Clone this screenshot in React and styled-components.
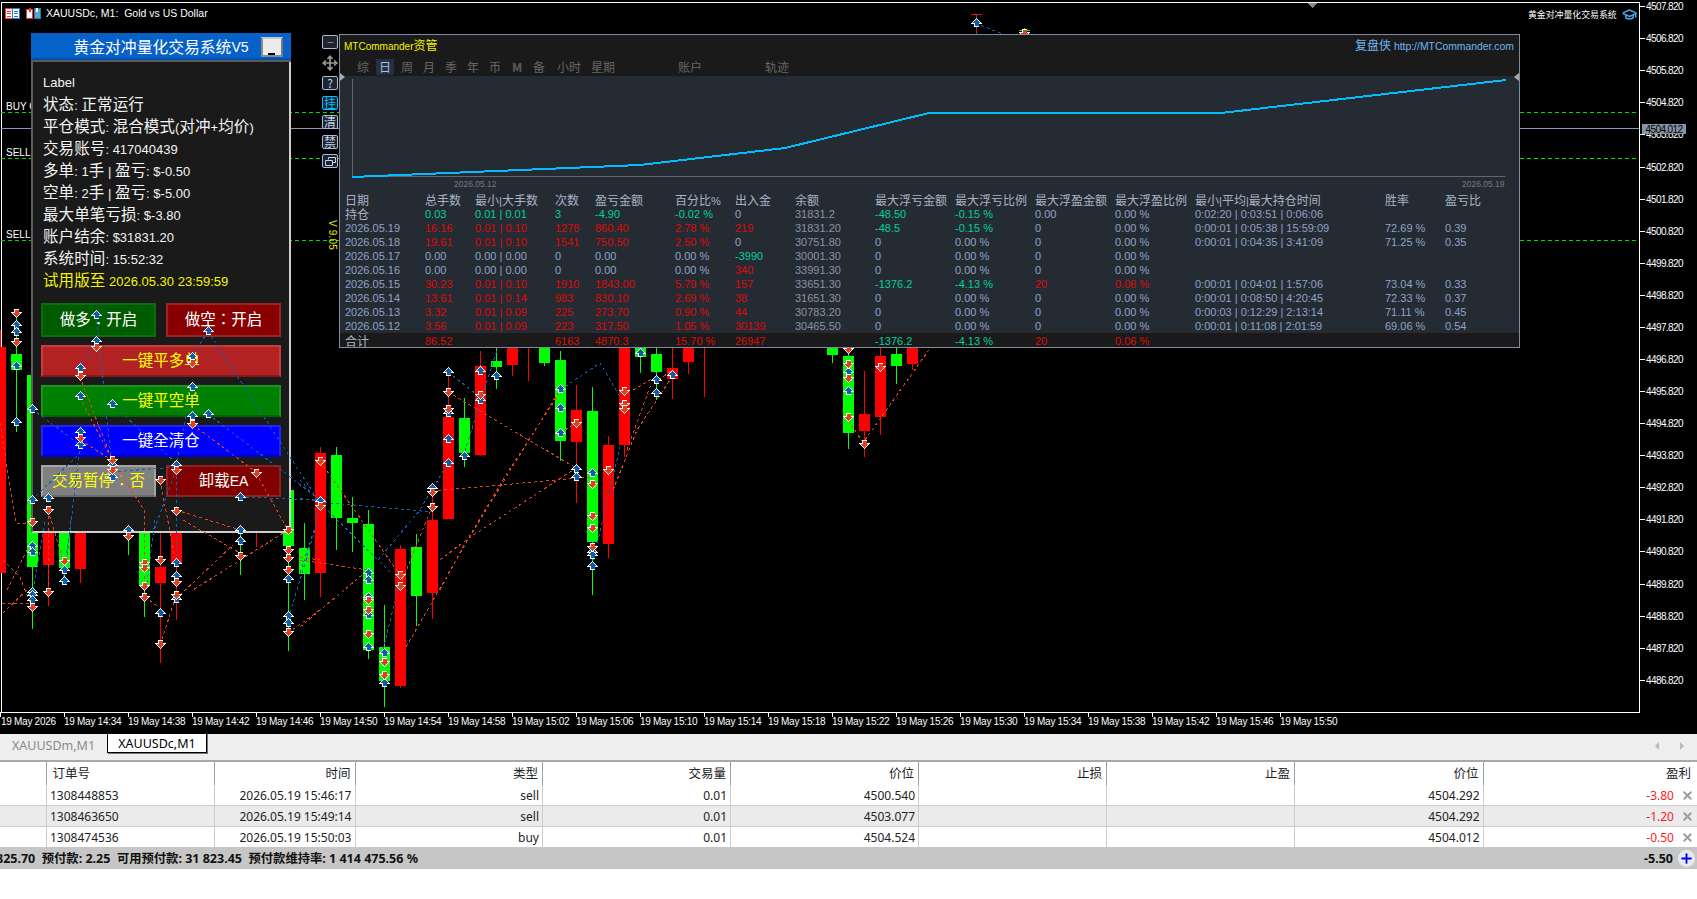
import React from "react";
import styled, { createGlobalStyle } from "styled-components";
import { Move, GraduationCap, Plus, X, Minus } from "lucide-react";

const Global = createGlobalStyle`
  html, body { margin: 0; padding: 0; background: #fff; overflow: hidden; }
  #root { width: 1697px; height: 899px; }
  * { box-sizing: border-box; }
`;

const LATIN = `"Liberation Sans", Arial, "Noto Sans CJK SC", sans-serif`;
const UI = `"Noto Sans", "Noto Sans CJK SC", sans-serif`;

const Page = styled.div`
  width: 1697px; height: 899px; display: flex; flex-direction: column;
  background: #fff; overflow: hidden; font-family: ${LATIN};
`;
const ChartWindow = styled.div`
  position: relative; height: 734px; flex: none; background: #000; overflow: hidden;
`;
const ChartRow = styled.div`
  display: flex; height: 713px; align-items: flex-start;
`;
const Plot = styled.div`
  width: 1639px; height: 711px; margin: 2px 0 0 1px; border: 1px solid #fff; flex: none;
`;
const PriceAxis = styled.div`
  display: flex; flex-direction: column; margin-top: -9.4px; flex: none;
`;
const PriceLabel = styled.div`
  height: 32.08px; display: flex; align-items: center; color: #fff;
  font-size: 10px; letter-spacing: -0.6px;
  &::before { content: ""; width: 5px; height: 1px; background: #fff; margin-right: 1px; }
`;
const PriceTag = styled.div`
  position: absolute; left: 1642px; top: 124px; width: 44px; height: 10px;
  background: #8593a3; color: #000; font-size: 10px; line-height: 11px;
  letter-spacing: -0.6px; text-align: center;
`;
const TimeAxis = styled.div`display: flex; height: 21px;`;
const TimeTick = styled.div`
  position: relative; width: 64px; flex: none; padding: 3px 0 0 0; color: #fff;
  font-size: 10px; line-height: 12px; letter-spacing: -0.28px; white-space: nowrap;
  &::before { content: ""; position: absolute; left: 0; top: -1px; width: 1px; height: 5px; background: #fff; }
  &:first-child { padding-left: 1px; }
`;
const Layer = styled.svg`position: absolute; left: 0; top: 0; display: block;`;
const OrderLabel = styled.div`
  position: absolute; left: 6px; top: ${p => p.$top}px; color: #fff; font-size: 10px; line-height: 12px;
`;
const Caption = styled.div`
  position: absolute; left: 5px; top: 7px; display: flex; align-items: center; gap: 6px;
  color: #fff; font-size: 10.5px; line-height: 13px; white-space: pre;
`;
const CaptionText = styled.span`margin-left: -1px;`;
const BrandMark = styled.div`
  position: absolute; left: 1528px; top: 7px; display: flex; align-items: center; gap: 5px;
  color: #fff; font-family: "Noto Sans CJK SC", sans-serif; font-size: 8.9px; line-height: 14px;
`;

const Zh = styled.span`
  font-family: var(--zh-font, "Noto Sans CJK SC"), sans-serif; font-size: var(--zh, 1.1em); letter-spacing: var(--zh-ls, 0);
`;
const T = ({ children }) =>
  String(children).split(/([\u4e00-\u9fff\uff1a]+)/).map((s, i) =>
    /[\u4e00-\u9fff\uff1a]/.test(s) ? <Zh key={i}>{s}</Zh> : s
  );

/* control panel */
const Panel = styled.section`
  position: absolute; left: 31px; top: 33px; width: 260px; height: 500px;
  background: #1a1a1a; display: flex; flex-direction: column;
  border-left: 2px solid #5e5e5e; border-right: 2px solid #cfcfcf; border-bottom: 2px solid #cfcfcf;
`;
const TitleBar = styled.header`
  position: relative; height: 29px; margin: 0 -2px; flex: none; display: flex; align-items: center; justify-content: center;
  background: #0662c9; border-bottom: 2px solid #5a5a5a; box-shadow: inset 0 -2px 0 #0450b0;
  color: #fff; font-size: 14px; --zh: 15.8px;
`;
const MinBtn = styled.button`
  position: absolute; right: 8px; top: 4px; width: 22px; height: 20px; padding: 0;
  background: #ececec; border: 2px solid #8a8a8a; border-top-color: #c8c8c8; border-right-color: #777;
  &::after { content: ""; position: absolute; left: 5px; bottom: 0; width: 7px; height: 2px; background: #000; }
`;
const InfoList = styled.div`
  padding: 7.5px 0 0 10px; display: flex; flex-direction: column; --zh: 15.5px; --zh-ls: 0.1px;
`;
const InfoLine = styled.div`
  height: 22px; line-height: 22px; color: ${p => p.$c || "#f4f4f4"}; font-size: 13px; white-space: pre;
  &:first-child { padding-top: 2px; }
`;
const Buttons = styled.div`
  display: grid; grid-template-columns: 115px 115px; column-gap: 10px; row-gap: 8px;
  grid-template-rows: 34px 32px 32px 32px 32px; margin: 13.5px 0 0 8px; width: 240px;
`;
const ActBtn = styled.button`
  grid-column: ${p => (p.$wide ? "1 / 3" : "auto")};
  background: ${p => p.$bg}; color: ${p => p.$fg || "#fff"};
  border: 2px solid ${p => p.$edge}; border-bottom-color: ${p => p.$low || p.$edge};
  padding: 0 0 2px; font-family: ${LATIN}; font-size: 14px; --zh: 15.5px; --zh-font: "Noto Sans CJK TC"; white-space: pre; line-height: 1;
`;

/* toolbar */
const Toolbar = styled.div`
  position: absolute; left: 322px; top: 35px; width: 16px; display: flex; flex-direction: column; align-items: center; gap: 5.5px;
`;
const ToolBtn = styled.div`
  width: 16px; height: 14px; border: 1px solid ${p => p.$c || "#a9bcd6"}; border-radius: 2px;
  background: #1c2430; color: ${p => p.$c || "#c3d2e6"}; display: flex; align-items: center; justify-content: center;
  font-family: "Noto Sans CJK SC", sans-serif; font-size: 12px; line-height: 12px;
`;
const VersionTag = styled.div`
  position: absolute; left: 327px; top: 220px; writing-mode: vertical-rl; color: #e8e800;
  font-size: 10px; line-height: 11px; white-space: nowrap; letter-spacing: 0.2px;
`;

/* statistics window */
const Stats = styled.section`
  position: absolute; left: 339px; top: 34px; width: 1181px; height: 314px;
  background: #1a1a1a; border: 1px solid #7f8aa3; display: flex; flex-direction: column;
`;
const StatsHead = styled.header`height: 41px; flex: none; display: flex; flex-direction: column;`;
const StatsTitle = styled.div`
  height: 18px; display: flex; align-items: center; justify-content: space-between; padding: 0 5px 0 4px; font-size: 10px; --zh: 12px;
`;
const Yellow = styled.span`color: #f4f400;`;
const Link = styled.span`color: #6fb7f0; font-size: 10.4px;`;
const TabRow = styled.nav`display: flex; height: 17px; margin-top: 5px; padding-left: 12px; align-items: center;`;
const Tab = styled.span`
  width: ${p => p.$w || 22}px; margin-left: ${p => p.$ml || 0}px; flex: none; text-align: center;
  font-family: "Noto Sans CJK SC", sans-serif; font-size: 12px; line-height: 16px; color: #666;
  ${p => p.$active && `color:#a8c2e2; background: linear-gradient(#253040,#253040) center/18px 16px no-repeat;`}
  ${p => p.$small && `font-size: 8px; font-weight: 700; color:#5b5b5b;`}
`;
const Nub = styled.i`
  position: absolute; top: 38px; ${p => (p.$right ? "right: 0" : "left: 0")}; width: 0; height: 0;
  border-top: 4px solid transparent; border-bottom: 4px solid transparent;
  ${p => (p.$right ? "border-right: 5px solid #aaa;" : "border-left: 5px solid #aaa;")}
`;
const StatsBody = styled.div`flex: 1; background: #252b33; display: flex; flex-direction: column;`;
const Curve = styled.svg`display: block; width: 1179px; height: 117px; flex: none;`;
const CurveDate = styled.text`font: 8.5px ${LATIN}; fill: #6f7b8b;`;
const StatGrid = styled.div`
  display: grid; padding-left: 5px; grid-auto-rows: 14px; font-size: 11px; --zh: 12px;
  grid-template-columns: 80px 50px 80px 40px 80px 60px 60px 80px 80px 80px 80px 80px 190px 60px 60px;
`;
const StatCell = styled.div`
  line-height: 14px; white-space: nowrap; height: 14px;
  color: ${p => p.$c || "#8fa4c4"};
`;
const TotalRow = styled(StatGrid)`background: #1a1a1a; height: 14px; flex: none; padding-top: 1px;`;

/* bottom */
const TabStrip = styled.div`
  height: 26px; flex: none; background: #eee; position: relative; display: flex; align-items: flex-start; font-family: ${UI};
`;
const ChartTab = styled.div`
  height: ${p => (p.$on ? 20 : 22)}px; width: ${p => p.$w}px; flex: none; display: flex; align-items: center; justify-content: center;
  font-size: 12.5px; color: ${p => (p.$on ? "#000" : "#8a8a8a")};
  margin-top: ${p => (p.$on ? -1 : 0)}px;
  ${p => p.$on && `background:#fff; border:1px solid #000; box-shadow:1px 1px 0 #777; position: relative;`}
`;
const StripArrows = styled.div`
  position: absolute; left: 1655px; top: 8px; width: 29px; display: flex; justify-content: space-between;
`;
const Arrow = styled.i`
  width: 0; height: 0; border-top: 4px solid transparent; border-bottom: 4px solid transparent;
  ${p => (p.$r ? "border-left: 4px solid #bbb;" : "border-right: 4px solid #bbb;")}
`;
const COLS = "47px 168px 140.5px 187.5px 188px 188px 188px 188px 188.5px 213.5px";
const OrderHead = styled.div`
  display: grid; grid-template-columns: ${COLS}; height: 25px; flex: none; background: #fff;
  border-top: 2px solid #a8a8a8; font-family: ${UI}; font-size: 12px;
`;
const HeadCell = styled.div`
  border-right: 1px solid #a0a0a0; color: #222; line-height: 22px; padding: 0 4px 0 5.5px;
  text-align: ${p => (p.$left ? "left" : "right")}; font-family: "Noto Sans CJK SC", sans-serif; font-size: 12.5px;
  &:last-child { border-right: 0; padding-right: 6px; }
`;
const OrderRow = styled.div`
  display: grid; grid-template-columns: ${COLS}; height: ${p => p.$h}px; flex: none;
  background: ${p => (p.$alt ? "#ebebeb" : "#fff")}; border-bottom: ${p => (p.$last ? 0 : "1px solid #cdcdcd")};
  font-family: ${UI}; font-size: 12px; color: #222;
`;
const DataCell = styled.div`
  border-right: 1px solid #cdcdcd; line-height: 21px; padding: 0 3px; position: relative;
  text-align: ${p => (p.$left ? "left" : "right")}; color: ${p => p.$c || "inherit"};
  &:last-child { border-right: 0; padding-right: 23px; }
`;
const CloseMark = styled.span`
  position: absolute; right: 3px; top: 4px; display: flex; color: #9c9c9c;
`;
const TotalBar = styled.footer`
  height: 22px; flex: none; background: #c6c6c6; display: flex; justify-content: space-between; align-items: center;
  font-family: ${UI}; font-weight: 700; font-size: 12.5px; color: #111; padding-right: 2px; white-space: pre; --zh: 12.3px;
`;
const TotalLeft = styled.span`margin-left: -4px;`;
const TotalRight = styled.div`display: flex; align-items: center; gap: 5px;`;
const PlusRound = styled.span`
  width: 17px; height: 17px; border-radius: 50%; background: #e9e9f2; color: #0000ee;
  display: flex; align-items: center; justify-content: center;
`;

/* data */
const G = "#00ff00", R = "#ff0000";
const candles = [
  [0,347,573,330,573,R],[16,354,370,310,432,G],[32,375,567,340,629,G],[48,480,565,470,606,R],
  [64,480,568,470,585,G],[80,480,569,470,583,R],[128,480,533,470,555,G],[144,480,585,470,617,G],
  [160,567,583,530,663,R],[176,480,564,470,620,R],[240,480,490,470,575,G],[256,480,490,470,547,R],
  [288,490,546,470,651,G],[304,548,574,523,600,G],[320,453,573,447,597,R],[336,455,518,447,550,G],
  [352,518,523,497,552,G],[368,524,650,510,659,G],[384,647,681,605,707,G],[400,549,686,545,688,R],
  [416,547,596,534,626,G],[432,520,593,487,619,R],[448,417,519,368,519,R],[464,418,453,398,467,G],
  [480,366,455,351,456,R],[496,361,367,348,389,G],[512,340,365,330,376,R],[528,340,345,330,381,R],
  [544,340,363,330,366,G],[560,360,441,351,461,G],[576,410,442,385,503,R],[592,411,542,387,595,G],
  [608,445,544,436,558,R],[624,340,445,330,457,R],[640,340,357,330,373,G],[656,354,372,340,400,G],
  [672,368,379,345,399,R],[688,340,362,330,374,R],[704,340,345,330,397,R],[832,340,355,330,363,G],
  [848,356,433,340,449,G],[864,414,431,371,457,R],[880,356,417,340,435,R],[896,354,366,340,384,G],
  [912,340,364,330,370,R],[976,14,15,14,34,R],[1024,30,31,28,34,G],
];
const redLines = [
  "432,491 592,477","448,392 576,468","300,627 368,570","300,560 368,570","406,647 466,543 527,443 560,390",
  "440,560 466,540 576,468","440,590 463,547 507,473 557,397","613,490 637,430 672,377","627,450 650,387 672,370",
  "633,390 653,378","865,440 931,347","848,420 864,444","80,377 112,460","80,397 112,460","80,440 112,460",
  "112,460 144,510","48,510 63,560","193,425 256,472","256,473 288,530","176,510 240,530","288,530 193,590",
  "160,480 176,563","0,423 16,523 32,523","3,560 20,577 30,603","2,603 30,603","3,613 30,587","7,590 27,550",
  "145,597 160,608","160,645 177,593","180,595 233,545","245,557 288,530","183,520 240,553","288,633 320,610",
  "300,557 320,560","144,510 144,597","48,510 48,592","320,461 400,575","400,586 432,507","560,433 576,423",
];
const blueLines = [
  "300,498 320,502 432,512","378,560 420,510 448,463","383,650 400,580","300,480 320,503 390,572","300,573 315,527 320,503",
  "448,372 480,397","463,457 497,350","560,390 600,363 620,397","592,566 620,447","96,315 112,467","96,341 80,368",
  "32,409 80,445","112,404 176,463","208,331 192,357","208,414 320,500","208,331 320,503","80,445 67,557","176,470 153,533",
  "112,472 176,467","240,497 320,500","32,500 80,453","192,387 176,465","290,613 315,530","33,590 45,520","63,583 71,520",
  "147,583 155,520","176,470 176,563","976,23 1002,34","976,14 976,34",
];
const ups = "16,325 16,332 16,366 16,422 96,315 96,341 80,368 80,396 112,404 32,409 192,357 192,387 192,416 208,331 208,414 80,432 80,445 112,465 112,477 176,465 32,500 48,498 320,501 240,497 128,530 240,530 240,541 32,546 32,552 32,592 32,595 32,600 64,570 64,581 176,563 176,576 176,599 160,613 288,579 288,616 288,623 368,573 368,580 368,597 368,615 368,647 384,653 384,683 432,488 448,372 448,413 448,439 448,463 464,456 480,371 480,400 496,376 560,389 560,408 560,433 576,469 576,477 592,473 592,552 592,555 592,566 640,353 656,380 656,393 672,375 848,372 848,391 976,23";
const downs = "16,313 16,342 96,347 80,376 192,363 192,424 80,438 112,460 112,470 176,470 160,480 48,510 176,511 128,536 240,556 32,522 32,607 64,561 48,592 144,563 144,568 144,586 144,597 160,560 160,644 176,582 176,595 288,530 288,550 288,558 288,570 288,632 256,473 320,461 320,506 368,600 368,610 368,634 384,662 384,675 400,575 400,586 432,492 432,507 448,392 448,409 480,395 576,423 592,484 592,516 592,528 592,547 608,470 624,391 624,404 624,409 848,349 848,364 848,378 848,417 864,444 880,367 1024,33";

const pts = s => s.split(" ").map(p => p.split(",").map(Number));
const UP = "0,-4 4,0 2,0 2,3 -2,3 -2,0 -4,0";
const DOWN = "0,4 4,0 2,0 2,-3 -2,-3 -2,0 -4,0";
const Marker = ({ x, y, up }) => (
  <g transform={`translate(${x + 0.5} ${y})`}>
    <polygon points={up ? UP : DOWN} fill="#fff" stroke="#fff" strokeWidth="1.6" />
    <polygon points={up ? UP : DOWN} fill={up ? "#0b5fa8" : "#e33f1f"} />
  </g>
);

const A = "#00cf9e", H = "#a9b4c4", B = "#8fa4c4", M = "#8894a6", D = "#dd0a0a";
const rows = [
  [["持仓",H],["0.03",A],["0.01 | 0.01",A],["3",A],["-4.90",A],["-0.02 %",A],["0",B],["31831.2",M],["-48.50",A],["-0.15 %",A],["0.00",B],["0.00 %",B],["0:02:20 | 0:03:51 | 0:06:06",B],["",B],["",B]],
  [["2026.05.19",B],["16.16",D],["0.01 | 0.10",D],["1278",D],["860.40",D],["2.78 %",D],["219",D],["31831.20",M],["-48.5",A],["-0.15 %",A],["0",B],["0.00 %",B],["0:00:01 | 0:05:38 | 15:59:09",B],["72.69 %",B],["0.39",B]],
  [["2026.05.18",B],["19.61",D],["0.01 | 0.10",D],["1541",D],["750.50",D],["2.50 %",D],["0",B],["30751.80",M],["0",B],["0.00 %",B],["0",B],["0.00 %",B],["0:00:01 | 0:04:35 | 3:41:09",B],["71.25 %",B],["0.35",B]],
  [["2026.05.17",B],["0.00",B],["0.00 | 0.00",B],["0",B],["0.00",B],["0.00 %",B],["-3990",A],["30001.30",M],["0",B],["0.00 %",B],["0",B],["0.00 %",B],["",B],["",B],["",B]],
  [["2026.05.16",B],["0.00",B],["0.00 | 0.00",B],["0",B],["0.00",B],["0.00 %",B],["340",D],["33991.30",M],["0",B],["0.00 %",B],["0",B],["0.00 %",B],["",B],["",B],["",B]],
  [["2026.05.15",B],["30.23",D],["0.01 | 0.10",D],["1910",D],["1843.00",D],["5.79 %",D],["157",D],["33651.30",M],["-1376.2",A],["-4.13 %",A],["20",D],["0.06 %",D],["0:00:01 | 0:04:01 | 1:57:06",B],["73.04 %",B],["0.33",B]],
  [["2026.05.14",B],["13.61",D],["0.01 | 0.14",D],["983",D],["830.10",D],["2.69 %",D],["38",D],["31651.30",M],["0",B],["0.00 %",B],["0",B],["0.00 %",B],["0:00:01 | 0:08:50 | 4:20:45",B],["72.33 %",B],["0.37",B]],
  [["2026.05.13",B],["3.32",D],["0.01 | 0.09",D],["225",D],["273.70",D],["0.90 %",D],["44",D],["30783.20",M],["0",B],["0.00 %",B],["0",B],["0.00 %",B],["0:00:03 | 0:12:29 | 2:13:14",B],["71.11 %",B],["0.45",B]],
  [["2026.05.12",B],["3.56",D],["0.01 | 0.09",D],["223",D],["317.50",D],["1.05 %",D],["30139",D],["30465.50",M],["0",B],["0.00 %",B],["0",B],["0.00 %",B],["0:00:01 | 0:11:08 | 2:01:59",B],["69.06 %",B],["0.54",B]],
];
const heads = ["日期","总手数","最小|大手数","次数","盈亏金额","百分比%","出入金","余额","最大浮亏金额","最大浮亏比例","最大浮盈金额","最大浮盈比例","最小|平均|最大持仓时间","胜率","盈亏比"];
const totals = [["合计",H],["86.52",D],["",D],["6163",D],["4870.3",D],["15.70 %",D],["26947",D],["",D],["-1376.2",A],["-4.13 %",A],["20",D],["0.06 %",D],["",D],["",D],["",D]];
const tabs = [["综"],["日",22,0,1],["周"],["月"],["季"],["年"],["币"],["M",22,0,0,1],["备"],["小时",34,2],["星期",34],["账户",34,53],["轨迹",34,53]];
const prices = Array.from({ length: 22 }, (_, i) => (4507.82 - i).toFixed(3));
const times = ["19 May 2026"];
for (let m = 14 * 60 + 34; m <= 15 * 60 + 50; m += 4)
  times.push(`19 May ${Math.floor(m / 60)}:${String(m % 60).padStart(2, "0")}`);
const orders = [
  ["1308448853","2026.05.19 15:46:17","sell","0.01","4500.540","4504.292","-3.80"],
  ["1308463650","2026.05.19 15:49:14","sell","0.01","4503.077","4504.292","-1.20"],
  ["1308474536","2026.05.19 15:50:03","buy","0.01","4504.524","4504.012","-0.50"],
];

const TableIcon = () => (
  <svg width="15" height="11" viewBox="0 0 15 11" shapeRendering="crispEdges">
    <rect x="0.5" y="0.5" width="14" height="10" fill="#fff" stroke="#e33" />
    <rect x="7.5" y="0.5" width="7" height="10" fill="#fff" stroke="#27c" />
    <path d="M2 3h4M2 5.5h4M2 8h4" stroke="#e33" />
    <path d="M9 3h4M9 5.5h4M9 8h4" stroke="#27c" />
  </svg>
);
const PairIcon = () => (
  <svg width="15" height="11" viewBox="0 0 15 11" shapeRendering="crispEdges">
    <rect x="0.5" y="1.5" width="6" height="9" fill="#fff" stroke="#e33" />
    <rect x="8.5" y="0.5" width="6" height="10" fill="#5ab" stroke="#27c" />
    <rect x="3" y="0" width="2" height="4" fill="#e33" />
    <rect x="10" y="0" width="2" height="4" fill="#fff" />
  </svg>
);

export default function App() {
  return (
    <Page>
      <Global />
      <ChartWindow>
        <ChartRow>
          <Plot />
          <PriceAxis>
            {prices.map(p => <PriceLabel key={p}>{p}</PriceLabel>)}
          </PriceAxis>
        </ChartRow>
        <TimeAxis>
          {times.map(t => <TimeTick key={t}>{t}</TimeTick>)}
        </TimeAxis>
        <PriceTag>4504.012</PriceTag>

        <Layer width="1640" height="712" shapeRendering="crispEdges">
          <polygon points="1307,3 1317,3 1312,8" fill="#888" />
          {[112, 158, 240].map(y => (
            <line key={y} x1="1" x2="1639" y1={y + 0.5} y2={y + 0.5} stroke="#00e000" strokeDasharray="4 3" />
          ))}
          <line x1="1" x2="1639" y1="128.5" y2="128.5" stroke="#8a99b5" />
          {candles.map(([x, t, b, wt, wb, c]) => (
            <g key={x} fill={c}>
              <rect x={x} y={wt} width="1" height={wb - wt} />
              <rect x={x - 5} y={t} width="11" height={b - t} />
            </g>
          ))}
        </Layer>
        <OrderLabel $top={101}>BUY C</OrderLabel>
        <OrderLabel $top={147}>SELL C</OrderLabel>
        <OrderLabel $top={229}>SELL C</OrderLabel>
        <Caption><TableIcon /><PairIcon /><CaptionText>XAUUSDc, M1:  Gold vs US Dollar</CaptionText></Caption>
        <BrandMark>黄金对冲量化交易系统<GraduationCap size={15} color="#4aa8e0" strokeWidth={2.4} /></BrandMark>

        <Panel>
          <TitleBar>
            <T>黄金对冲量化交易系统V5</T>
            <MinBtn aria-label="minimize" />
          </TitleBar>
          <InfoList>
            <InfoLine>Label</InfoLine>
            <InfoLine><T>状态: 正常运行</T></InfoLine>
            <InfoLine><T>平仓模式: 混合模式(对冲+均价)</T></InfoLine>
            <InfoLine><T>交易账号: 417040439</T></InfoLine>
            <InfoLine><T>多单: 1手 | 盈亏: $-0.50</T></InfoLine>
            <InfoLine><T>空单: 2手 | 盈亏: $-5.00</T></InfoLine>
            <InfoLine><T>最大单笔亏损: $-3.80</T></InfoLine>
            <InfoLine><T>账户结余: $31831.20</T></InfoLine>
            <InfoLine><T>系统时间: 15:52:32</T></InfoLine>
            <InfoLine $c="#f4f400"><T>试用版至 2026.05.30 23:59:59</T></InfoLine>
          </InfoList>
          <Buttons>
            <ActBtn $bg="#005c00" $edge="#0a6e0a"><T>做多：开启</T></ActBtn>
            <ActBtn $bg="#880000" $edge="#a02222"><T>做空：开启</T></ActBtn>
            <ActBtn $wide $bg="#b22222" $edge="#c83c3c" $low="#8b1818" $fg="#ffff00"><T>一键平多单</T></ActBtn>
            <ActBtn $wide $bg="#008000" $edge="#1a941a" $low="#006800" $fg="#ffff00"><T>一键平空单</T></ActBtn>
            <ActBtn $wide $bg="#0000ff" $edge="#2222ff" $low="#0000d0"><T>一键全清仓</T></ActBtn>
            <ActBtn $bg="#808080" $edge="#a4a4a4" $low="#6a6a6a" $fg="#ffff00"><T>交易暂停：否</T></ActBtn>
            <ActBtn $bg="#800000" $edge="#902020"><T>卸载EA</T></ActBtn>
          </Buttons>
        </Panel>

        <Layer width="1640" height="712" shapeRendering="crispEdges">
          {redLines.map(l => <polyline key={l} points={l} fill="none" stroke="#e5431f" strokeDasharray="3 3" />)}
          {blueLines.map(l => <polyline key={l} points={l} fill="none" stroke="#0f62b4" strokeDasharray="3 3" />)}
          {pts(ups).map(([x, y], i) => <Marker key={"u" + i} x={x} y={y} up />)}
          {pts(downs).map(([x, y], i) => <Marker key={"d" + i} x={x} y={y} />)}
        </Layer>

        <Stats>
          <StatsHead>
            <StatsTitle>
              <Yellow><T>MTCommander资管</T></Yellow>
              <Link><T>复盘侠 http://MTCommander.com</T></Link>
            </StatsTitle>
            <TabRow>
              {tabs.map(([t, w, ml, on, small]) => (
                <Tab key={t} $w={w} $ml={ml} $active={on} $small={small}>{t}</Tab>
              ))}
            </TabRow>
          </StatsHead>
          <Nub />
          <Nub $right />
          <StatsBody>
            <Curve viewBox="340 76 1179 117">
              <path d="M352.5 79V177M352 176.5H1505" stroke="#666" fill="none" shapeRendering="crispEdges" />
              <polyline points="352,177 640,165 785,148 929,113 1221,113 1506,80" fill="none" stroke="#00bfff" strokeWidth="2" shapeRendering="crispEdges" />
              <CurveDate x="454" y="187">2026.05.12</CurveDate>
              <CurveDate x="1462" y="187">2026.05.19</CurveDate>
            </Curve>
            <StatGrid>
              {heads.map(h => <StatCell key={h} $c={H}><T>{h}</T></StatCell>)}
              {rows.map((r, i) => r.map(([v, c], j) => (
                <StatCell key={i + "-" + j} $c={c}><T>{v}</T></StatCell>
              )))}
            </StatGrid>
          </StatsBody>
          <TotalRow>
            {totals.map(([v, c], j) => <StatCell key={j} $c={c}><T>{v}</T></StatCell>)}
          </TotalRow>
        </Stats>

        <Toolbar>
          <ToolBtn><Minus size={9} strokeWidth={1.5} /></ToolBtn>
          <Move size={16} color="#9a9a9a" strokeWidth={2.6} />
          <ToolBtn>?</ToolBtn>
          <ToolBtn $c="#00bfff">挂</ToolBtn>
          <ToolBtn>清</ToolBtn>
          <ToolBtn>禁</ToolBtn>
          <ToolBtn>
            <svg width="11" height="9" viewBox="0 0 11 9" fill="none" stroke="#c3d2e6"><path d="M3.5 2.5V.5h7v5h-3M.5 3.5h7v5h-7z" /></svg>
          </ToolBtn>
        </Toolbar>
        <VersionTag>V 9.05</VersionTag>
      </ChartWindow>

      <TabStrip>
        <ChartTab $w={107}>XAUUSDm,M1</ChartTab>
        <ChartTab $on $w={100}>XAUUSDc,M1</ChartTab>
        <StripArrows><Arrow /><Arrow $r /></StripArrows>
      </TabStrip>

      <OrderHead>
        <HeadCell />
        <HeadCell $left>订单号</HeadCell>
        <HeadCell>时间</HeadCell>
        <HeadCell>类型</HeadCell>
        <HeadCell>交易量</HeadCell>
        <HeadCell>价位</HeadCell>
        <HeadCell>止损</HeadCell>
        <HeadCell>止盈</HeadCell>
        <HeadCell>价位</HeadCell>
        <HeadCell>盈利</HeadCell>
      </OrderHead>
      {orders.map(([id, time, type, vol, open, now, pl], i) => (
        <OrderRow key={id} $alt={i === 1} $last={i === 2} $h={i === 2 ? 20 : 21}>
          <DataCell />
          <DataCell $left>{id}</DataCell>
          <DataCell>{time}</DataCell>
          <DataCell>{type}</DataCell>
          <DataCell>{vol}</DataCell>
          <DataCell>{open}</DataCell>
          <DataCell />
          <DataCell />
          <DataCell>{now}</DataCell>
          <DataCell $c="#ff1a1a">{pl}<CloseMark><X size={13} strokeWidth={3.5} /></CloseMark></DataCell>
        </OrderRow>
      ))}
      <TotalBar>
        <TotalLeft>825.70  <T>预付款</T>: 2.25  <T>可用预付款</T>: 31 823.45  <T>预付款维持率</T>: 1 414 475.56 %</TotalLeft>
        <TotalRight>-5.50<PlusRound><Plus size={15} strokeWidth={3} /></PlusRound></TotalRight>
      </TotalBar>
    </Page>
  );
}
